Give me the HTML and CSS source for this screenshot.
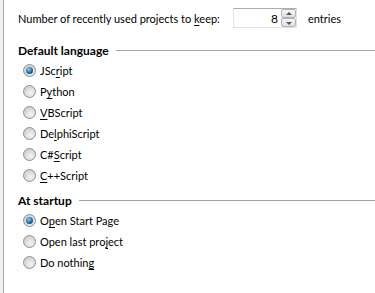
FILE: index.html
```html
<!DOCTYPE html>
<html lang="en">
<head>
  <meta charset="UTF-8" />
  <title>Options</title>
  <link rel="stylesheet" href="styles.css">
</head>
<body>

  <div class="page">
    <div class="recent-row">
      <label class="recent-label" for="recent">Number of recently used projects to <u>k</u>eep:</label>
      <div class="spinbox">
        <input type="text" id="recent" value="8" />
        <div class="spin-buttons">
          <span class="spin up"></span>
          <span class="spin down"></span>
        </div>
      </div>
      <span class="suffix">entries</span>
    </div>

    <div class="group-title">Default language</div>
    <div class="radio-list">
      <div class="radio-row"><span class="radio checked"></span>JSc<u>r</u>ipt</div>
      <div class="radio-row"><span class="radio"></span>P<u>y</u>thon</div>
      <div class="radio-row"><span class="radio"></span><u>V</u>BScript</div>
      <div class="radio-row"><span class="radio"></span>De<u>l</u>phiScript</div>
      <div class="radio-row"><span class="radio"></span>C#<u>S</u>cript</div>
      <div class="radio-row"><span class="radio"></span><u>C</u>++Script</div>
    </div>

    <div class="group-title second">At startup</div>
    <div class="radio-list">
      <div class="radio-row"><span class="radio checked"></span>O<u>p</u>en Start Page</div>
      <div class="radio-row"><span class="radio"></span>Open last pro<u>j</u>ect</div>
      <div class="radio-row"><span class="radio"></span>Do nothin<u>g</u></div>
    </div>
  </div>

</body>
</html>
```

FILE: styles.css
```css
html, body {
  margin: 0;
  height: 100%;
}

body {
  background-color: #f0f0f0;
  font-family: Lato, "Liberation Sans", sans-serif;
  font-size: 11px;
  color: #000;
}

.page {
  margin-left: 3px;
  height: 100%;
  box-sizing: border-box;
  border-left: 1px solid #a7a7a7;
  background: white;
  padding: 8px 0 0 14px;
  overflow: hidden;
}

u {
  text-decoration-thickness: 1px;
  text-underline-offset: 2px;
}

.recent-row {
  display: flex;
  align-items: center;
  height: 20px;
}

.recent-label {
  flex: none;
  width: 215px;
  white-space: nowrap;
}

.spinbox {
  flex: none;
  display: flex;
  width: 64px;
  height: 20px;
  box-sizing: border-box;
  border: 1px solid #dfe3e8;
  border-top-color: #abadb3;
}

.spinbox input {
  flex: 1;
  width: 40px;
  min-width: 0;
  border: none;
  padding: 0 3px 0 0;
  font: inherit;
  font-size: 12px;
  text-align: right;
  background: white;
  color: #000;
  outline: none;
}

.spin-buttons {
  flex: none;
  width: 15px;
  display: flex;
  flex-direction: column;
}

.spin {
  flex: 1;
  position: relative;
  border: 1px solid #b4b4b4;
  border-radius: 2px;
  background: linear-gradient(#f6f6f6, #dedede);
}

.spin::after {
  content: "";
  position: absolute;
  left: 50%;
  top: 50%;
  margin-left: -3px;
  border-left: 3px solid transparent;
  border-right: 3px solid transparent;
}

.spin.up::after {
  margin-top: -2px;
  border-bottom: 3px solid #4a5a6a;
}

.spin.down::after {
  margin-top: -1px;
  border-top: 3px solid #4a5a6a;
}

.suffix {
  margin-left: 11px;
}

.group-title {
  display: flex;
  align-items: center;
  height: 20px;
  margin-top: 12px;
  font-size: 12px;
  font-weight: bold;
}

.group-title::after {
  content: "";
  flex: 1;
  margin-left: 7px;
  border-top: 1px solid #a5a5a5;
}

.group-title.second {
  margin-top: 4px;
}

.radio-row {
  display: flex;
  align-items: center;
  height: 21px;
  padding-left: 5px;
}

.radio {
  position: relative;
  width: 13px;
  height: 13px;
  box-sizing: border-box;
  margin-right: 4px;
  border: 1px solid #8d8f91;
  border-radius: 50%;
  background: radial-gradient(circle at 60% 65%, #f4f4f4, #d2d2d2 70%);
}

.radio.checked::after {
  content: "";
  position: absolute;
  left: 2px;
  top: 2px;
  width: 7px;
  height: 7px;
  border-radius: 50%;
  background: radial-gradient(circle at 40% 35%, #8fd0f0, #1f6aa0 55%, #0c2c48);
}
```
